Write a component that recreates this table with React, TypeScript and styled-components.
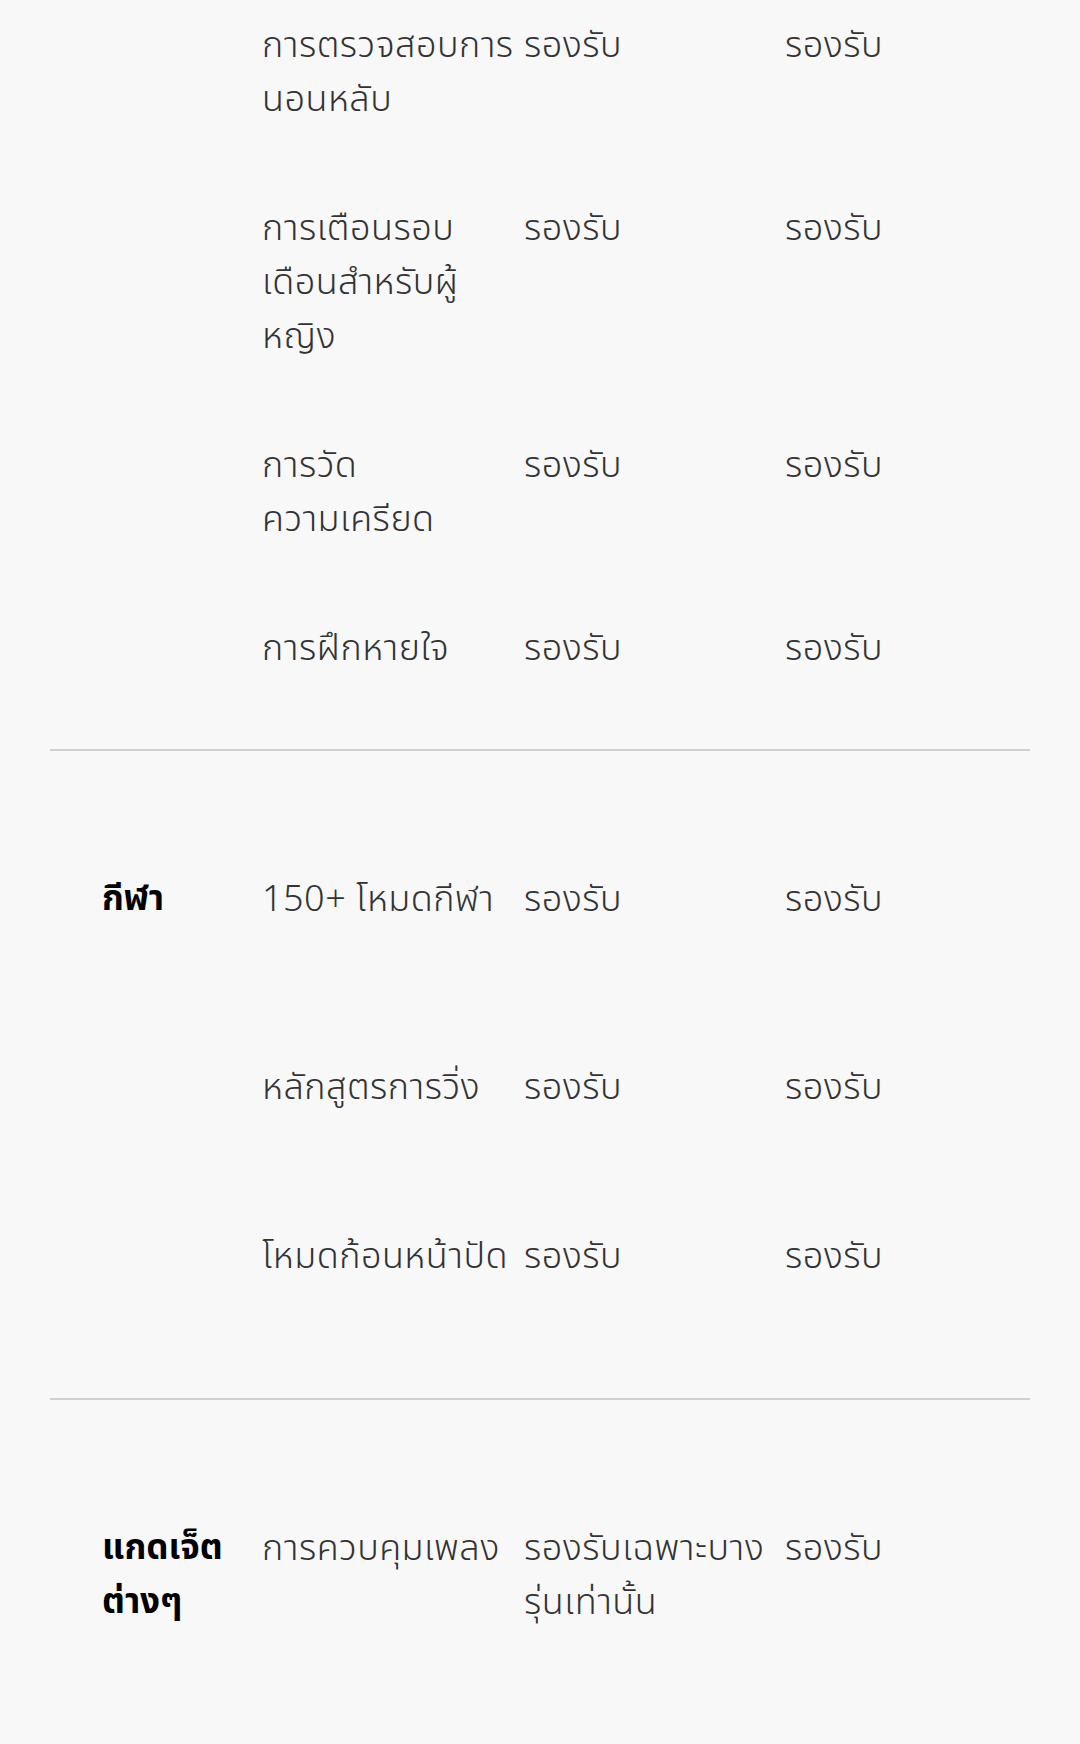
import React from 'react';
import styled, { createGlobalStyle } from 'styled-components';

const GlobalStyle = createGlobalStyle`
  html, body {
    margin: 0;
    padding: 0;
    background: #f8f8f8;
  }
  body {
    font-family: "Noto Sans Thai", "Noto Sans Thai UI", "Sarabun", "Loma", "Garuda", "Noto Sans", sans-serif;
    -webkit-font-smoothing: antialiased;
  }
`;

const Page = styled.div`
  width: 1080px;
  min-height: 1744px;
  background: #f8f8f8;
`;

const Section = styled.section<{ $divider?: boolean; $bottom: number }>`
  display: flex;
  margin: 0 50px;
  padding: 0 0 ${(p) => p.$bottom}px 52px;
  border-bottom: ${(p) => (p.$divider ? '2px solid #d0d0d0' : 'none')};
`;

const Category = styled.div<{ $top: number }>`
  flex: 0 0 160px;
  padding-top: ${(p) => p.$top}px;
  font-size: 35px;
  line-height: 54px;
  font-weight: 700;
  color: #000;
`;

const Rows = styled.div`
  flex: 1;
  display: flex;
  flex-direction: column;
`;

const Row = styled.div<{ $top: number }>`
  display: grid;
  grid-template-columns: 262px 261px 1fr;
  padding-top: ${(p) => p.$top}px;
`;

const Cell = styled.div`
  font-size: 36px;
  line-height: 54px;
  letter-spacing: 0.5px;
  font-weight: 300;
  color: #333;
`;

const Line = styled.span`
  display: block;
  white-space: nowrap;
`;

type Item = { feature: string[]; a: string[]; b: string[]; top: number };

type Group = { category?: string[]; items: Item[]; bottom: number; divider: boolean };

const ok = ['รองรับ'];

const groups: Group[] = [
  {
    divider: true,
    bottom: 73,
    items: [
      { feature: ['การตรวจสอบการ', 'นอนหลับ'], a: ok, b: ok, top: 19 },
      { feature: ['การเตือนรอบ', 'เดือนสำหรับผู้', 'หญิง'], a: ok, b: ok, top: 75 },
      { feature: ['การวัด', 'ความเครียด'], a: ok, b: ok, top: 75 },
      { feature: ['การฝึกหายใจ'], a: ok, b: ok, top: 75 },
    ],
  },
  {
    category: ['กีฬา'],
    divider: true,
    bottom: 114,
    items: [
      { feature: ['150+ โหมดกีฬา'], a: ok, b: ok, top: 122 },
      { feature: ['หลักสูตรการวิ่ง'], a: ok, b: ok, top: 134 },
      { feature: ['โหมดก้อนหน้าปัด'], a: ok, b: ok, top: 115 },
    ],
  },
  {
    category: ['แกดเจ็ต', 'ต่างๆ'],
    divider: false,
    bottom: 114,
    items: [
      {
        feature: ['การควบคุมเพลง'],
        a: ['รองรับเฉพาะบาง', 'รุ่นเท่านั้น'],
        b: ok,
        top: 122,
      },
    ],
  },
];

const Lines: React.FC<{ lines: string[] }> = ({ lines }) => (
  <>
    {lines.map((l) => (
      <Line key={l}>{l}</Line>
    ))}
  </>
);

const App: React.FC = () => {
  return (
    <Page lang="th">
      <GlobalStyle />
      {groups.map((g, gi) => (
        <Section key={gi} $divider={g.divider} $bottom={g.bottom}>
          <Category $top={g.items[0].top}>{g.category && <Lines lines={g.category} />}</Category>
          <Rows>
            {g.items.map((it, i) => (
              <Row key={i} $top={it.top}>
                <Cell>
                  <Lines lines={it.feature} />
                </Cell>
                <Cell>
                  <Lines lines={it.a} />
                </Cell>
                <Cell>
                  <Lines lines={it.b} />
                </Cell>
              </Row>
            ))}
          </Rows>
        </Section>
      ))}
    </Page>
  );
};

export default App;
